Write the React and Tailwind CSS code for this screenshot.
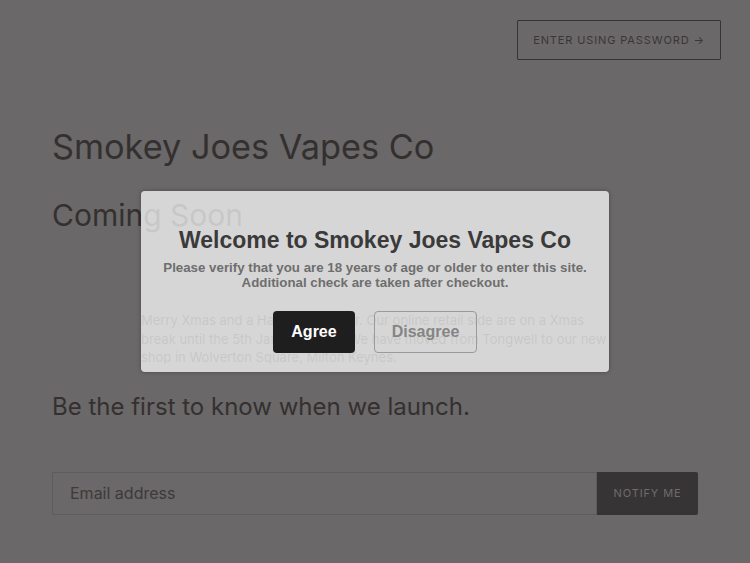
import React from "react";

export default function App() {
  return (
    <div className="relative min-h-[563px] w-[750px] overflow-hidden bg-[#6a6868] font-['Inter',sans-serif] text-[#343030]">
      {/* Header */}
      <div className="flex justify-end pt-[20px] pr-[29px]">
        <button className="h-[40px] w-[204px] border border-[#363434] rounded-[1px] text-[11px] tracking-[0.08em] text-[#3a3636] uppercase">
          Enter using password →
        </button>
      </div>

      <main className="px-[52px]">
        <h1 className="mt-[66px] text-[34.3px] leading-[41px] font-normal">
          Smokey Joes Vapes Co
        </h1>
        <h2 className="mt-[30px] text-[30px] leading-[36px] font-normal">
          Coming Soon
        </h2>

        <p className="mt-[78px] ml-[89px] w-[480px] text-[13px] leading-[18.5px]">
          <span className="block">Merry Xmas and a Happy New Year. Our online retail side are on a Xmas</span>
          <span className="block">break until the 5th January 2023. We have moved from Tongwell to our new</span>
          <span className="block">shop in Wolverton Square, Milton Keynes.</span>
        </p>

        <h3 className="mt-[25px] text-[24px] leading-[29px] font-normal">
          Be the first to know when we launch.
        </h3>

        <form className="mt-[51px] flex h-[43px]" onSubmit={(e) => e.preventDefault()}>
          <input
            type="email"
            placeholder="Email address"
            className="flex-1 border border-[#5e5c5c] bg-transparent px-[17px] text-[16px] placeholder:text-[#3e3a3a] outline-none"
          />
          <button className="w-[101px] bg-[#363434] text-[11px] tracking-[0.08em] text-[#6e6c6c] uppercase rounded-r-[2px]">
            Notify me
          </button>
        </form>
      </main>

      {/* Age verification modal */}
      <div className="absolute left-[141px] top-[191px] w-[468px] h-[181px] rounded-[4px] bg-white/[0.73] shadow-[0_0_4px_rgba(0,0,0,0.3)] font-['Liberation_Sans',Arial,sans-serif] text-center">
        <h2 className="pt-[36px] text-[23px] leading-[27px] font-bold text-[#3a3a3a]">
          Welcome to Smokey Joes Vapes Co
        </h2>
        <p className="mt-[6px] text-[13.3px] leading-[15px] font-bold text-[#6e6e6e]">
          Please verify that you are 18 years of age or older to enter this site.
          <br />
          Additional check are taken after checkout.
        </p>
        <div className="mt-[21px] flex justify-center gap-[19px]">
          <button className="h-[42px] w-[82px] rounded-[4px] bg-[#1e1e1e] text-[16px] font-bold text-white">
            Agree
          </button>
          <button className="h-[42px] w-[103px] rounded-[4px] border border-[#9a9a9a] text-[16px] font-bold text-[#858585]">
            Disagree
          </button>
        </div>
      </div>
    </div>
  );
}
